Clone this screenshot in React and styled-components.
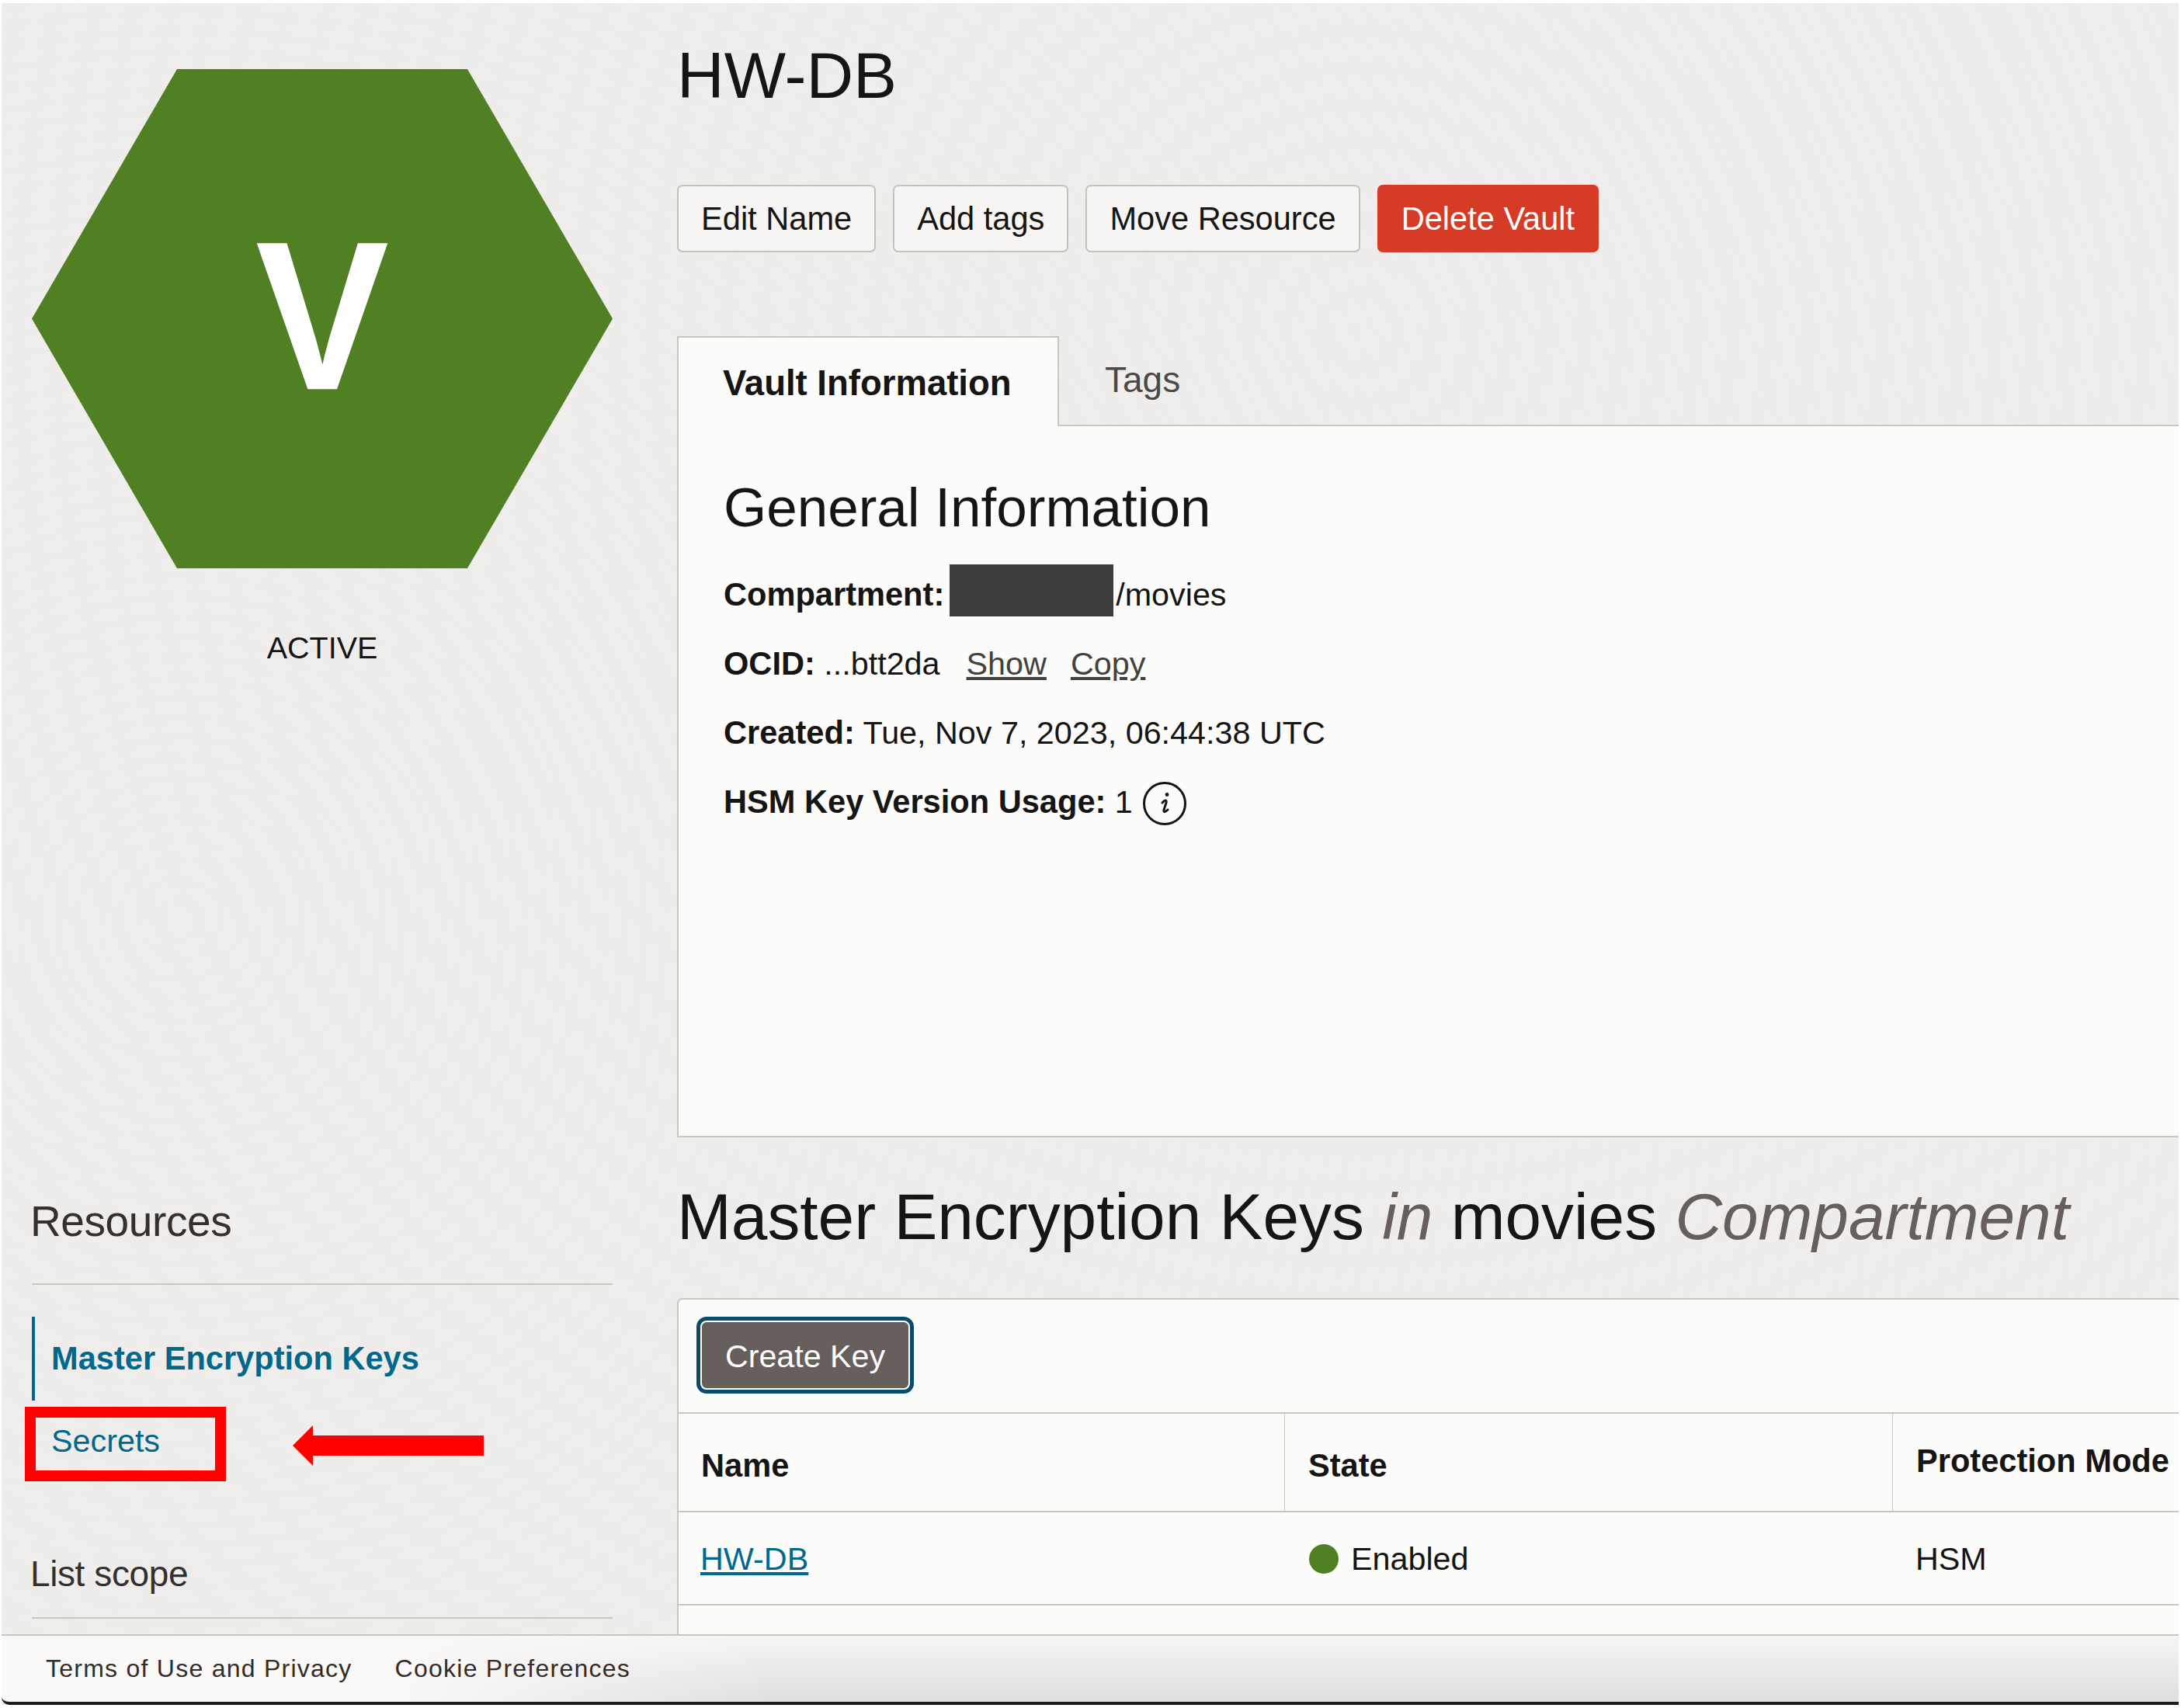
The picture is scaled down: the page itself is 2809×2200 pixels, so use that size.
import styled, { createGlobalStyle } from "styled-components";

const GlobalStyle = createGlobalStyle`
  html, body {
    margin: 0;
    padding: 0;
    width: 2809px;
    height: 2200px;
    overflow: hidden;
    background: #fff;
  }
  * { box-sizing: border-box; }
`;

const Window = styled.div`
  width: 2804px;
  height: 2192px;
  margin: 4px 3px 0 2px;
  display: flex;
  flex-direction: column;
  overflow: hidden;
  color: #161513;
  font-family: "Liberation Sans", Arial, sans-serif;
  font-size: 41.3px;
  background-color: #f0efed;
  background-image:
    repeating-radial-gradient(circle at 230px 1180px, rgba(120,115,110,0.014) 0, rgba(255,255,255,0.02) 13px, rgba(120,115,110,0.014) 26px),
    repeating-radial-gradient(circle at 1750px 420px, rgba(120,115,110,0.014) 0, rgba(255,255,255,0.02) 24px, rgba(120,115,110,0.014) 48px);
`;

const Workspace = styled.div`
  flex: 1;
  min-height: 0;
  display: flex;
  overflow: hidden;
`;

const Sidebar = styled.aside`
  flex: 0 0 870px;
  padding: 85px 0 0 39px;
`;

const Hexagon = styled.div`
  width: 748px;
  height: 643px;
  display: flex;
  align-items: center;
  justify-content: center;
  background: #508023;
  clip-path: polygon(25% 0, 75% 0, 100% 50%, 75% 100%, 25% 100%, 0 50%);
  color: #fff;
  font-size: 258px;
  font-weight: 700;
  line-height: 1;
`;

const HexLetter = styled.span`
  display: block;
  margin-bottom: 7px;
  transform: scaleY(1.06);
`;

const Status = styled.div`
  width: 748px;
  margin-top: 78px;
  text-align: center;
  font-size: 39.5px;
  line-height: 48px;
`;

const SideTitle = styled.div`
  width: 748px;
  margin-top: ${(p) => p.$top}px;
  padding-bottom: ${(p) => p.$below}px;
  border-bottom: 2px solid #c9c7c4;
  color: #33302e;
  font-size: ${(p) => p.$size}px;
  line-height: ${(p) => p.$line}px;
  letter-spacing: -0.4px;
  text-indent: -2px;
`;

const ActiveItem = styled.div`
  width: 748px;
  height: 108px;
  margin-top: 41px;
  padding-left: 21px;
  display: flex;
  align-items: center;
  border-left: 4px solid #00688c;
  color: #00688c;
  font-size: 41.6px;
  font-weight: 700;
`;

const SideItem = styled.div`
  position: relative;
  width: 748px;
  height: 104px;
  padding-left: 25px;
  display: flex;
  align-items: center;
  color: #00688c;
`;

const RedBox = styled.div`
  position: absolute;
  left: -9px;
  top: 8px;
  width: 259px;
  height: 96px;
  border: 14px solid #ff0000;
`;

const Arrow = styled.svg`
  position: absolute;
  left: 336px;
  top: 32px;
`;

const Main = styled.main`
  flex: 1;
  min-width: 0;
`;

const PageTitle = styled.h1`
  margin: 43px 0 0;
  font-size: 84px;
  font-weight: 400;
  line-height: 100px;
`;

const Actions = styled.div`
  display: flex;
  gap: 22px;
  margin-top: 91px;
`;

const Button = styled.button`
  height: 87px;
  padding: 0 29px;
  border: 2px solid ${(p) => (p.$danger ? "#d63b25" : "#c4c2bf")};
  border-radius: 7px;
  background: ${(p) => (p.$danger ? "#d63b25" : "#f6f5f3")};
  color: ${(p) => (p.$danger ? "#fff" : "#161513")};
  font: 400 41.6px "Liberation Sans", Arial, sans-serif;
`;

const TabBar = styled.div`
  display: flex;
  height: 116px;
  margin-top: 108px;
  border-bottom: 2px solid #c9c7c4;
`;

const ActiveTab = styled.div`
  width: 492px;
  height: 116px;
  padding: 3px 0 0 57px;
  display: flex;
  align-items: center;
  background: #fcfcfb;
  border: 2px solid #c9c7c4;
  border-bottom: 0;
  font-size: 45.5px;
  font-weight: 700;
`;

const Tab = styled.div`
  padding: 0 0 2px 59px;
  display: flex;
  align-items: center;
  color: #4c4845;
  font-size: 46px;
`;

const Panel = styled.section`
  height: 916px;
  padding: 63px 0 0 58px;
  background: #fcfcfb;
  border-left: 2px solid #c9c7c4;
  border-bottom: 2px solid #c9c7c4;
`;

const SectionTitle = styled.h2`
  margin: 0 0 26px;
  font-size: 71px;
  font-weight: 400;
  line-height: 84px;
`;

const InfoRow = styled.div`
  height: 89px;
  line-height: 89px;
  white-space: nowrap;
  b { font-size: 41.6px; line-height: 1; }
`;

const Redaction = styled.span`
  display: inline-block;
  width: 211px;
  height: 67px;
  margin: 0 3px 0 7px;
  vertical-align: -14px;
  background: #3b3b3b;
`;

const TextLink = styled.a`
  margin-left: ${(p) => p.$left}px;
  color: #45413e;
  text-decoration: underline;
`;

const InfoIcon = styled.svg`
  margin-left: 13px;
  vertical-align: -16px;
`;

const Heading = styled.h2`
  margin: 52px 0 55px;
  font-size: 83.8px;
  font-weight: 400;
  line-height: 100px;
  white-space: nowrap;
`;

const Muted = styled.em`
  color: #665f5b;
`;

const TableCard = styled.section`
  background: #fcfcfb;
  border-top: 2px solid #c9c7c4;
  border-left: 2px solid #c9c7c4;
  border-top-left-radius: 7px;
  height: 100%;
`;

const Toolbar = styled.div`
  height: 147px;
  padding: 27px 0 0 28px;
  border-bottom: 2px solid #c9c7c4;
`;

const PrimaryButton = styled.button`
  display: block;
  width: 270px;
  height: 89px;
  margin: 0;
  padding: 3px 0 0;
  border: 2px solid #fff;
  border-radius: 8px;
  outline: 5px solid #0b4a68;
  background: #665f5b;
  color: #fff;
  font: 400 41.2px "Liberation Sans", Arial, sans-serif;
`;

const Row = styled.div`
  display: grid;
  grid-template-columns: 780px 783px 1fr;
  height: ${(p) => p.$height}px;
  border-bottom: 2px solid #c9c7c4;
`;

const HeadCell = styled.div`
  padding: 8px 0 ${(p) => (p.$raised ? 12 : 0)}px 30px;
  display: flex;
  align-items: center;
  font-size: 41.6px;
  font-weight: 700;
  white-space: nowrap;
  border-left: ${(p) => (p.$first ? "0" : "1px solid #c9c7c4")};
  &:first-child { padding-left: 29px; }
`;

const Cell = styled.div`
  padding: 2px 0 0 30px;
  display: flex;
  align-items: center;
  white-space: nowrap;
  &:first-child { padding-left: 28px; }
`;

const NameLink = styled.a`
  color: #00688c;
  text-decoration: underline;
`;

const StatusDot = styled.span`
  width: 38px;
  height: 38px;
  margin: 0 16px 0 2px;
  border-radius: 50%;
  background: #508023;
`;

const Footer = styled.footer`
  flex: 0 0 91px;
  padding: 0 0 0 57px;
  display: flex;
  align-items: center;
  gap: 55px;
  border-top: 2px solid #c9c7c4;
  border-bottom: 4px solid #1c1c1c;
  border-bottom-left-radius: 10px;
  background:
    linear-gradient(to right, #faf9f7 0, #faf9f7 18%, rgba(250,249,247,0) 36%),
    linear-gradient(to bottom, #f6f5f4, #dedede);
  color: #312d2a;
  font-size: 32px;
  letter-spacing: 1.25px;
`;

function App() {
  return (
    <>
      <GlobalStyle />
      <Window>
        <Workspace>
          <Sidebar>
            <Hexagon><HexLetter>V</HexLetter></Hexagon>
            <Status>ACTIVE</Status>
            <SideTitle $top={683} $below={48} $size={55} $line={64}>Resources</SideTitle>
            <ActiveItem>Master Encryption Keys</ActiveItem>
            <SideItem>
              Secrets
              <RedBox />
              <Arrow width="246" height="52" viewBox="0 0 246 52">
                <path d="M0 26 L26 0 V13 H246 V39 H26 V52 Z" fill="#ff0000" />
              </Arrow>
            </SideItem>
            <SideTitle $top={92} $below={29} $size={46} $line={54}>List scope</SideTitle>
          </Sidebar>
          <Main>
            <PageTitle>HW-DB</PageTitle>
            <Actions>
              <Button>Edit Name</Button>
              <Button>Add tags</Button>
              <Button>Move Resource</Button>
              <Button $danger>Delete Vault</Button>
            </Actions>
            <TabBar>
              <ActiveTab>Vault Information</ActiveTab>
              <Tab>Tags</Tab>
            </TabBar>
            <Panel>
              <SectionTitle>General Information</SectionTitle>
              <InfoRow><b>Compartment:</b><Redaction />/movies</InfoRow>
              <InfoRow>
                <b>OCID:</b> ...btt2da
                <TextLink $left={34}>Show</TextLink>
                <TextLink $left={31}>Copy</TextLink>
              </InfoRow>
              <InfoRow><b>Created:</b> Tue, Nov 7, 2023, 06:44:38 UTC</InfoRow>
              <InfoRow>
                <b>HSM Key Version Usage:</b> 1
                <InfoIcon width="56" height="56" viewBox="0 0 56 56" fill="none" stroke="#161513">
                  <circle cx="28" cy="28" r="26.5" strokeWidth="3" />
                  <path d="M25 27 C28 23 31 23 30 27 L27 36 C26.5 40 29 39 32 36" strokeWidth="3" strokeLinecap="round" />
                  <circle cx="31" cy="16.5" r="2.4" fill="#161513" stroke="none" />
                </InfoIcon>
              </InfoRow>
            </Panel>
            <Heading>Master Encryption Keys <Muted>in</Muted> movies <Muted>Compartment</Muted></Heading>
            <TableCard>
              <Toolbar>
                <PrimaryButton>Create Key</PrimaryButton>
              </Toolbar>
              <Row $height={127}>
                <HeadCell $first>Name</HeadCell>
                <HeadCell>State</HeadCell>
                <HeadCell $raised>Protection Mode</HeadCell>
              </Row>
              <Row $height={120}>
                <Cell><NameLink>HW-DB</NameLink></Cell>
                <Cell><StatusDot />Enabled</Cell>
                <Cell>HSM</Cell>
              </Row>
            </TableCard>
          </Main>
        </Workspace>
        <Footer>
          <span>Terms of Use and Privacy</span>
          <span>Cookie Preferences</span>
        </Footer>
      </Window>
    </>
  );
}

export default App;
